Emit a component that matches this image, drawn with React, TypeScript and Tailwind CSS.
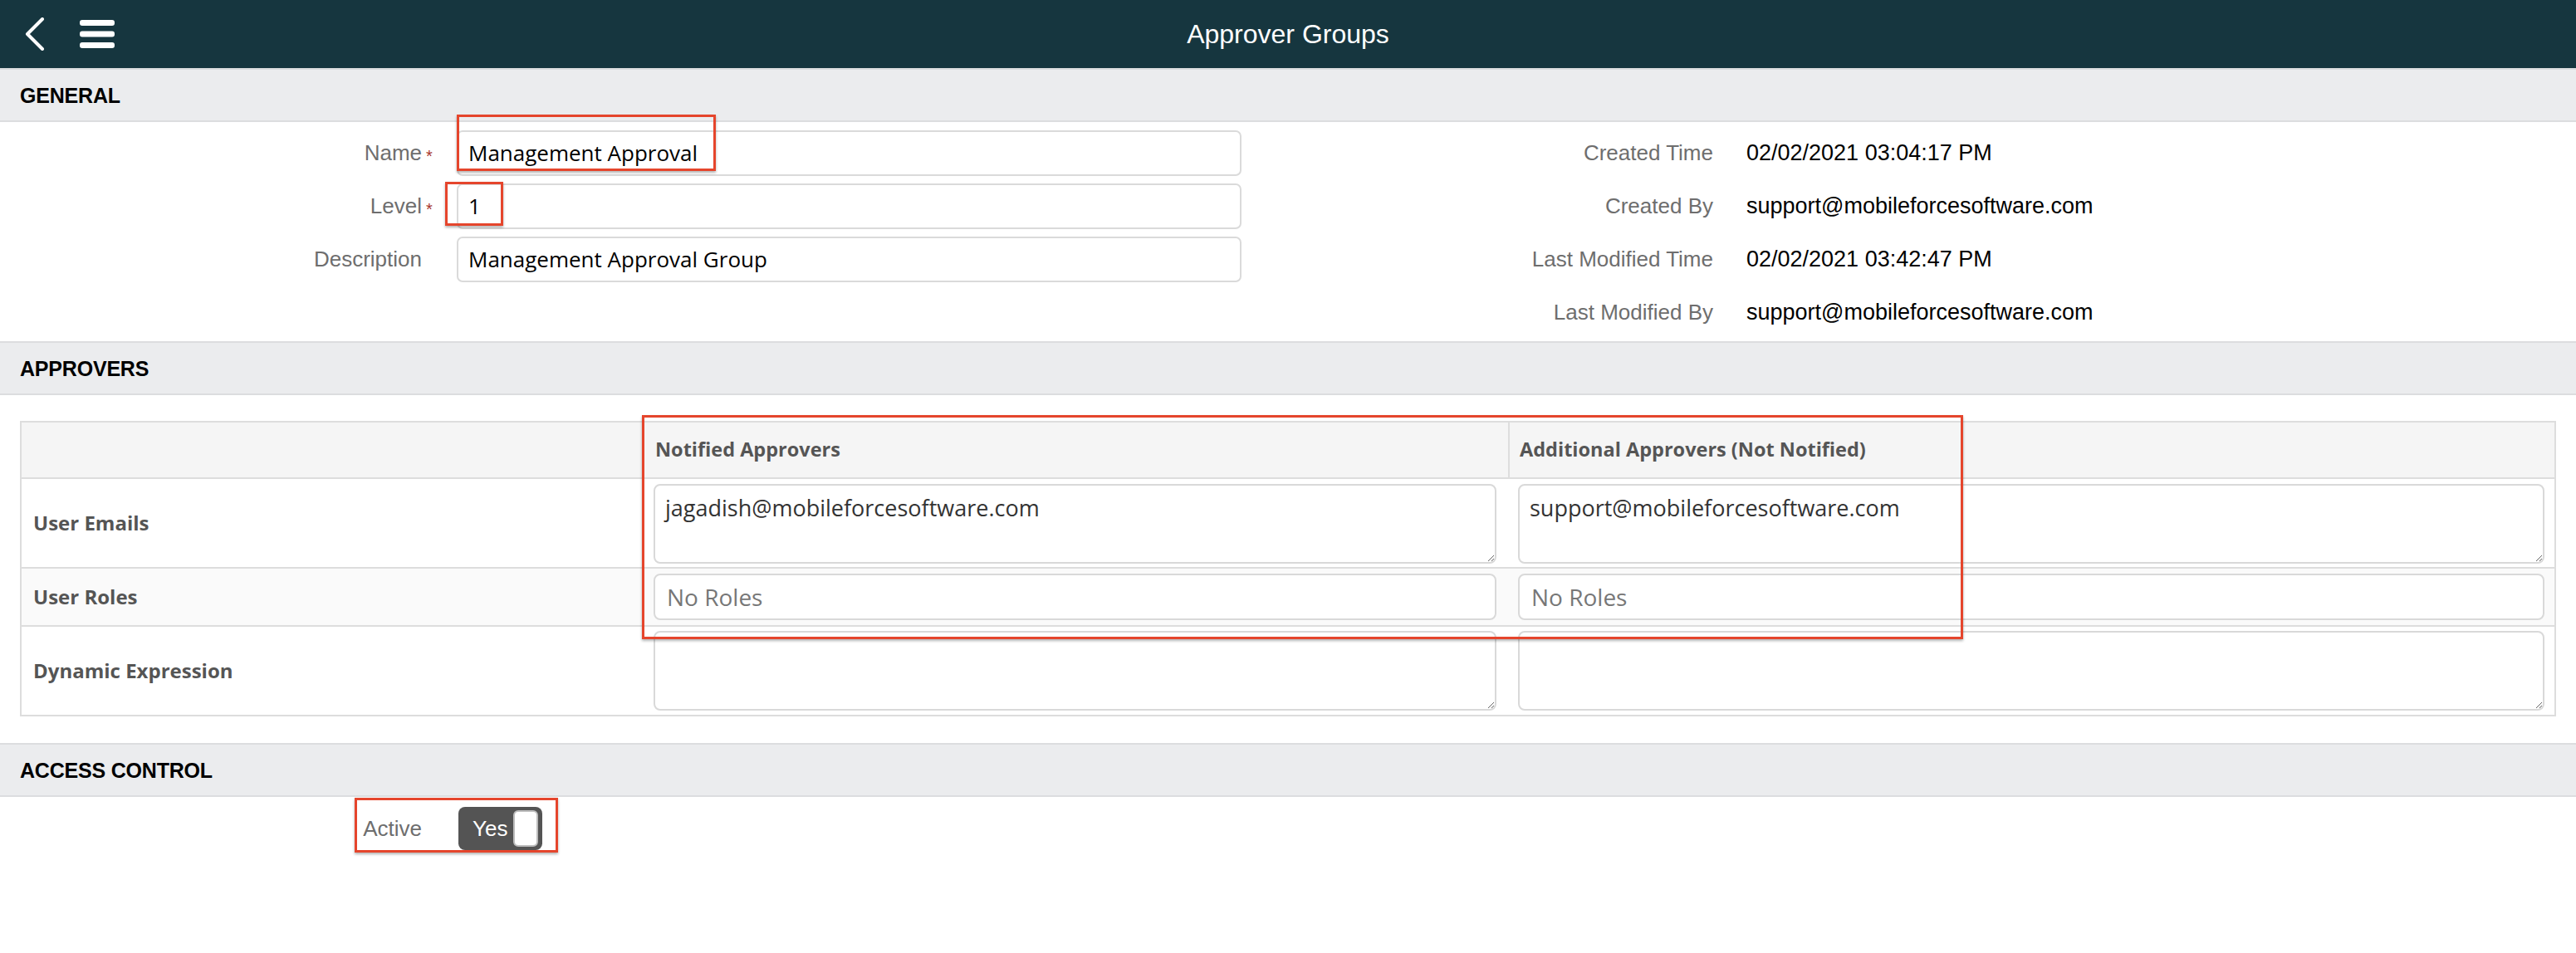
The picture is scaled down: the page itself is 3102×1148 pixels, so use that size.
import React from 'react';

const labelCls = "text-[26px] text-[#6e6e6e] text-right";
const openSans = "font-['Open_Sans',Arial,sans-serif]";

const Band = ({ title }: { title: string }) => (
  <div className="h-[65px] bg-[#ebecee] border-y-2 border-[#dcdddf] flex items-center pl-[24px] pt-[2px] text-[25px] font-bold text-black tracking-[-0.2px]">
    {title}
  </div>
);

const FormRow = ({ label, value, required }: { label: string; value: string; required?: boolean }) => (
  <div className="h-[64px] flex items-center">
    <div className={`w-[508px] ${labelCls}`}>{label}</div>
    <div className="w-[42px] pl-[5px] pt-[8px] text-[20px] leading-none text-[#a8352c]">{required ? '*' : ''}</div>
    <input
      readOnly
      value={value}
      className={`w-[945px] h-[55px] border-2 border-[#dadada] rounded-[7px] px-[12px] bg-white text-black text-[26px] outline-none ${openSans}`}
    />
  </div>
);

const InfoRow = ({ label, value }: { label: string; value: string }) => (
  <div className="h-[64px] flex items-center">
    <div className={`w-[568px] ${labelCls}`}>{label}</div>
    <div className="pl-[40px] text-[27px] text-black">{value}</div>
  </div>
);

const areaCls = `block w-full border-2 border-[#d9d9d9] rounded-[8px] bg-white px-[12px] pt-[9px] text-[27px] leading-[36px] text-[#333] outline-none ${openSans}`;
const rolesCls = `w-full h-[56px] border-2 border-[#d9d9d9] rounded-[8px] bg-white px-[14px] text-[28px] outline-none placeholder:text-[#777] ${openSans}`;
const rowLabel = `px-[14px] flex items-center text-[24px] font-bold text-[#555] ${openSans}`;
const headCls = `h-[68px] bg-[#f5f5f5] border-b-2 border-l-2 border-[#dddddd] flex items-center text-[23.5px] font-bold text-[#555] ${openSans}`;

export default function App() {
  return (
    <div className="relative w-[3102px] h-[1148px] bg-white overflow-hidden font-['Liberation_Sans',Arial,sans-serif]">
      <header className="h-[82px] bg-[#16363f] grid grid-cols-[1fr_auto_1fr] items-center">
        <div className="flex items-center pl-[30px] gap-[42px]">
          <svg width="24" height="40" viewBox="0 0 24 40">
            <polyline points="21,2 3,20 21,38" fill="none" stroke="white" strokeWidth="4" strokeLinecap="round" strokeLinejoin="round" />
          </svg>
          <svg width="42" height="34" viewBox="0 0 42 34">
            <rect x="0" y="0" width="42" height="7" rx="3" fill="white" />
            <rect x="0" y="13.5" width="42" height="7" rx="3" fill="white" />
            <rect x="0" y="27" width="42" height="7" rx="3" fill="white" />
          </svg>
        </div>
        <div className="text-white text-[32px]">Approver Groups</div>
        <div />
      </header>

      <Band title="GENERAL" />
      <div className="flex pt-[5px] pb-[3px]">
        <div className="w-[1495px]">
          <FormRow label="Name" value="Management Approval" required />
          <FormRow label="Level" value="1" required />
          <FormRow label="Description" value="Management Approval Group" />
        </div>
        <div>
          <InfoRow label="Created Time" value="02/02/2021 03:04:17 PM" />
          <InfoRow label="Created By" value="support@mobileforcesoftware.com" />
          <InfoRow label="Last Modified Time" value="02/02/2021 03:42:47 PM" />
          <InfoRow label="Last Modified By" value="support@mobileforcesoftware.com" />
        </div>
      </div>

      <Band title="APPROVERS" />
      <div className="pl-[24px] pr-[24px] pt-[31px] pb-[32px]">
        <div className="border-2 border-[#dddddd] grid grid-cols-[747px_1043px_1fr]">
          <div className="h-[68px] bg-[#f5f5f5] border-b-2 border-[#dddddd]" />
          <div className={`${headCls} pl-[14px]`}>Notified Approvers</div>
          <div className={`${headCls} pl-[12px]`}>Additional Approvers (Not Notified)</div>

          <div className={`h-[108px] border-b-2 border-[#dddddd] ${rowLabel}`}>User Emails</div>
          <div className="h-[108px] border-b-2 border-[#dddddd] px-[14px] pt-[6px]">
            <textarea readOnly className={`${areaCls} h-[96px]`} value="jagadish@mobileforcesoftware.com" />
          </div>
          <div className="h-[108px] border-b-2 border-[#dddddd] px-[12px] pt-[6px]">
            <textarea readOnly className={`${areaCls} h-[96px]`} value="support@mobileforcesoftware.com" />
          </div>

          <div className={`h-[70px] bg-[#fafafa] border-b-2 border-[#dddddd] ${rowLabel}`}>User Roles</div>
          <div className="h-[70px] bg-[#fafafa] border-b-2 border-[#dddddd] px-[14px] flex items-center">
            <input readOnly placeholder="No Roles" className={rolesCls} />
          </div>
          <div className="h-[70px] bg-[#fafafa] border-b-2 border-[#dddddd] px-[12px] flex items-center">
            <input readOnly placeholder="No Roles" className={rolesCls} />
          </div>

          <div className={`h-[106px] ${rowLabel}`}>Dynamic Expression</div>
          <div className="h-[106px] px-[14px] pt-[5px]">
            <textarea readOnly className={`${areaCls} h-[96px]`} value="" />
          </div>
          <div className="h-[106px] px-[12px] pt-[5px]">
            <textarea readOnly className={`${areaCls} h-[96px]`} value="" />
          </div>
        </div>
      </div>

      <Band title="ACCESS CONTROL" />
      <div className="h-[76px] flex items-center">
        <div className={`w-[508px] ${labelCls}`}>Active</div>
        <div className="ml-[44px] w-[101px] h-[52px] bg-[#545454] rounded-[8px] flex items-center">
          <span className="pl-[17px] text-white text-[26px]">Yes</span>
          <span className="ml-auto mr-[5px] w-[30px] h-[44px] bg-white rounded-[6px] border-2 border-[#bdbdbd]" />
        </div>
      </div>

      {/* annotation boxes */}
      <div className="absolute left-[550px] top-[138px] w-[312px] h-[68px] border-[3px] border-[#e5452c] shadow-[0_2px_3px_rgba(0,0,0,0.3)]" />
      <div className="absolute left-[536px] top-[219px] w-[70px] h-[53px] border-[3px] border-[#e5452c] shadow-[0_2px_3px_rgba(0,0,0,0.3)]" />
      <div className="absolute left-[773px] top-[500px] w-[1591px] h-[270px] border-[3px] border-[#e5452c] shadow-[0_2px_3px_rgba(0,0,0,0.3)]" />
      <div className="absolute left-[427px] top-[961px] w-[245px] h-[66px] border-[3px] border-[#e5452c] shadow-[0_2px_3px_rgba(0,0,0,0.3)]" />
    </div>
  );
}
